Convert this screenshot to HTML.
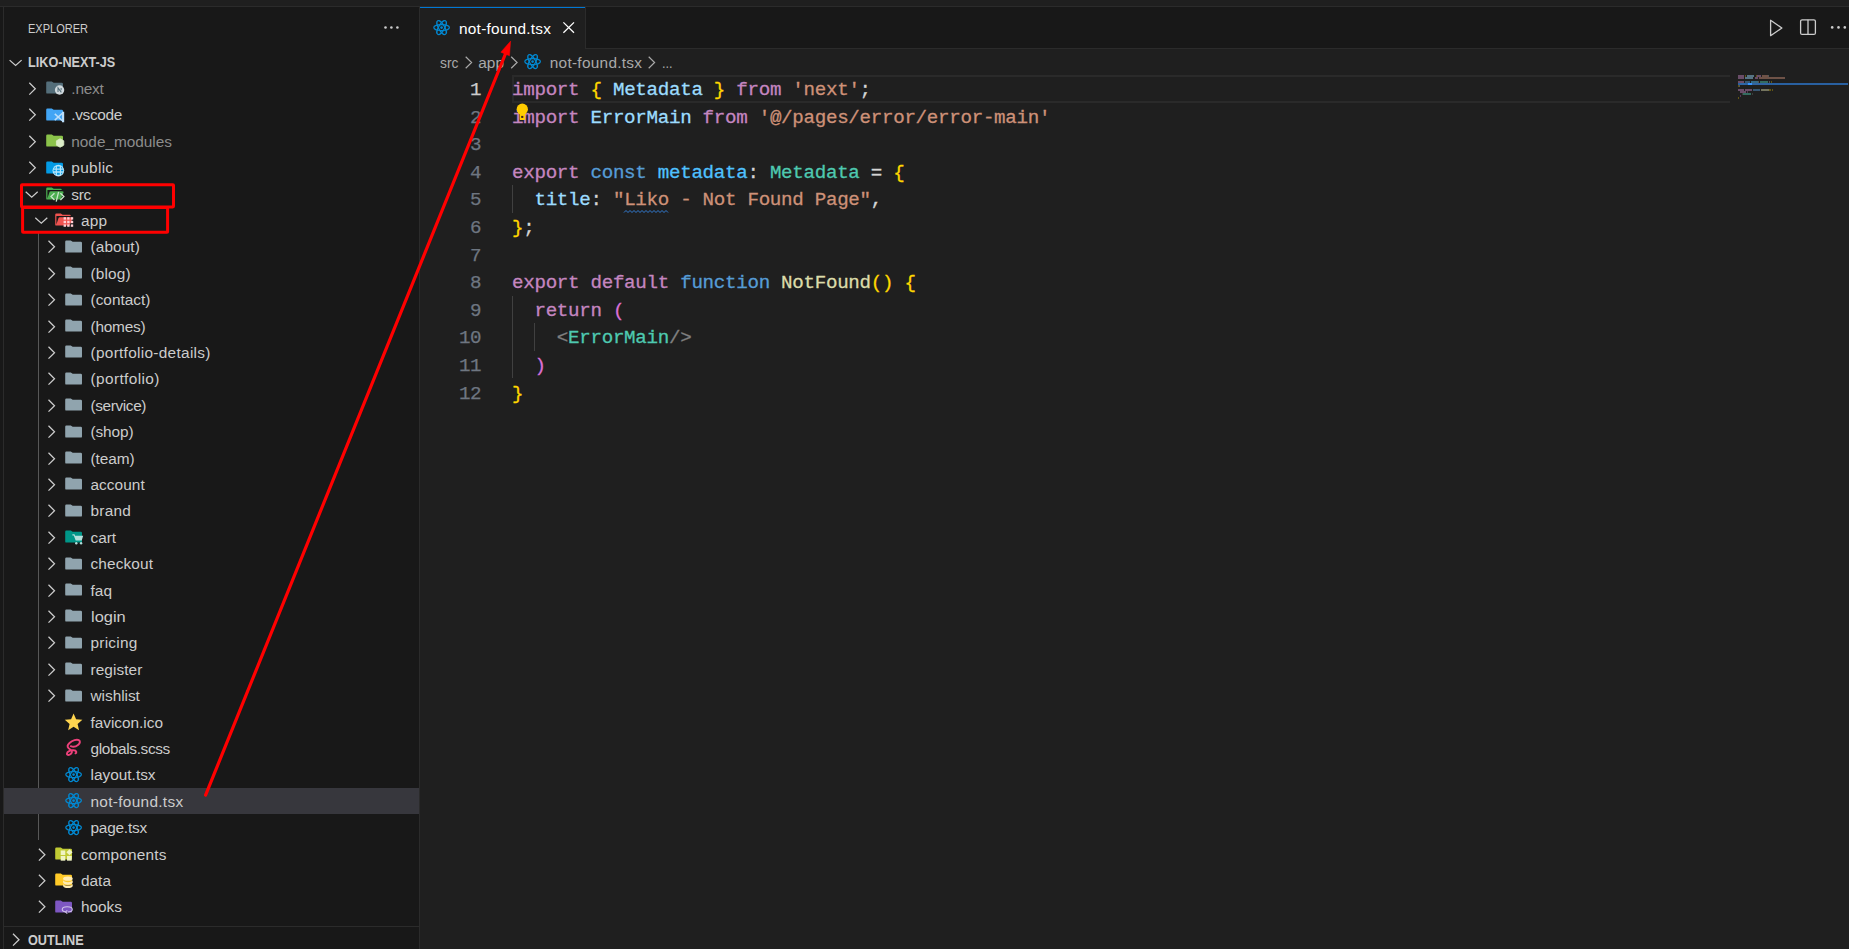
<!DOCTYPE html>
<html><head><meta charset="utf-8"><title>not-found.tsx</title>
<style>
html,body{margin:0;padding:0}
body{width:1849px;height:949px;overflow:hidden;background:#1f1f1f;position:relative;font-family:"Liberation Sans",sans-serif;color:#ccc}
div,svg{position:absolute}
.t{white-space:pre}
.i{overflow:visible}
#side{left:0;top:7px;width:419px;height:942px;background:#181818}
#tabs{left:420px;top:7px;width:1429px;height:41px;background:#181818}
.hl{background:#2b2b2b}
.sel{left:4px;width:415px;background:#37373d}
.ln{left:430px;width:51.300px;text-align:right;font-family:"Liberation Mono",monospace;font-size:19.2px;line-height:28px;letter-spacing:-0.304px;-webkit-text-stroke:0.25px currentColor}
.cl{left:512px;font-family:"Liberation Mono",monospace;font-size:19.2px;line-height:28px;letter-spacing:-0.304px;white-space:pre;color:#d4d4d4}
.cl span{-webkit-text-stroke:0.3px currentColor}
.g{width:1px;background:#404040}
.m{height:1.3px;opacity:.45}
</style></head><body>
<!-- top strip / borders -->
<div class="hl" style="left:0;top:6px;width:1849px;height:1px"></div>
<div id="side"></div>
<div class="hl" style="left:3px;top:7px;width:1px;height:942px"></div>
<div class="hl" style="left:419px;top:7px;width:1px;height:942px"></div>
<div id="tabs"></div>
<div class="hl" style="left:420px;top:48px;width:1429px;height:1px"></div>
<!-- active tab -->
<div style="left:420px;top:7px;width:165px;height:42px;background:#1f1f1f"></div>
<div style="left:420px;top:6.600px;width:165px;height:1.400px;background:#0078d4"></div>
<div class="hl" style="left:585px;top:7px;width:1px;height:41px"></div>
<svg class="i" style="left:432.00px;top:18.00px" width="19.2" height="19.2" viewBox="0 0 32 32"><ellipse cx="16" cy="16" rx="13" ry="5" fill="none" stroke="#0288d1" stroke-width="2"/><g transform="rotate(60 16 16)"><ellipse cx="16" cy="16" rx="13" ry="5" fill="none" stroke="#0288d1" stroke-width="2"/></g><g transform="rotate(120 16 16)"><ellipse cx="16" cy="16" rx="13" ry="5" fill="none" stroke="#0288d1" stroke-width="2"/></g><circle cx="16" cy="16" r="2.2" fill="#0288d1"/></svg>
<div class="t" style="left:459.00px;top:15px;font-size:15.4px;line-height:27px;color:#fff;letter-spacing:0.247px;">not-found.tsx</div>
<svg class="i" style="left:562.500px;top:22.300px" width="12" height="12" viewBox="0 0 12 12"><path d="M.4.400l10.600 10.400M11 .400L.4 10.800" stroke="#fff" stroke-width="1.300" fill="none"/></svg>
<!-- editor actions -->
<svg class="i" style="left:1760px;top:14px" width="89" height="28" viewBox="0 0 89 28"><g fill="none" stroke="#ccc" stroke-width="1.300" stroke-linejoin="round"><path d="M10.600 6.300v15.400l11.300-7.700Z"/><rect x="40.600" y="5.800" width="14.800" height="14.600" rx="1.500"/><path d="M48 5.800v14.600"/></g><g fill="#ccc"><circle cx="72.200" cy="13.400" r="1.300"/><circle cx="78.500" cy="13.400" r="1.300"/><circle cx="84.800" cy="13.400" r="1.300"/></g></svg>
<!-- breadcrumbs -->
<div class="t" style="left:439.60px;top:49px;font-size:15.4px;line-height:27px;color:#a9a9a9;letter-spacing:0.000px;transform:scaleX(0.8963);transform-origin:0 0;">src</div>
<div class="t" style="left:478.20px;top:49px;font-size:15.4px;line-height:27px;color:#a9a9a9;letter-spacing:0.052px;">app</div>
<svg class="i" style="left:523.00px;top:52.00px" width="19.2" height="19.2" viewBox="0 0 32 32"><ellipse cx="16" cy="16" rx="13" ry="5" fill="none" stroke="#0288d1" stroke-width="2"/><g transform="rotate(60 16 16)"><ellipse cx="16" cy="16" rx="13" ry="5" fill="none" stroke="#0288d1" stroke-width="2"/></g><g transform="rotate(120 16 16)"><ellipse cx="16" cy="16" rx="13" ry="5" fill="none" stroke="#0288d1" stroke-width="2"/></g><circle cx="16" cy="16" r="2.2" fill="#0288d1"/></svg>
<div class="t" style="left:549.80px;top:49px;font-size:15.4px;line-height:27px;color:#a9a9a9;letter-spacing:0.264px;">not-found.tsx</div>
<div class="t" style="left:662.00px;top:49px;font-size:15.4px;line-height:27px;color:#a9a9a9;letter-spacing:0.000px;transform:scaleX(0.8258);transform-origin:0 0;">...</div>
<svg class="i" style="left:420px;top:48px" width="300" height="27" viewBox="0 0 300 27"><g fill="none" stroke="#a9a9a9" stroke-width="1.200"><path d="M45.700 8.700l5.900 5.800-5.900 5.800M91.200 8.700l5.900 5.800-5.900 5.800M228.700 8.700l5.900 5.800-5.900 5.800"/></g></svg>
<!-- sidebar header -->
<div class="t" style="left:27.80px;top:16px;font-size:12.8px;line-height:25px;color:#ccc;letter-spacing:0.000px;transform:scaleX(0.8621);transform-origin:0 0;">EXPLORER</div>
<svg class="i" style="left:380px;top:20px" width="24" height="14" viewBox="0 0 24 14"><g fill="#ccc"><circle cx="5.500" cy="7.500" r="1.300"/><circle cx="11.400" cy="7.500" r="1.300"/><circle cx="17.400" cy="7.500" r="1.300"/></g></svg>
<div class="t" style="left:27.80px;top:50px;font-size:13.8px;line-height:25px;color:#ccc;letter-spacing:0.000px;transform:scaleX(0.9171);transform-origin:0 0;font-weight:bold;">LIKO-NEXT-JS</div>
<!-- tree -->
<div style="left:38px;top:233px;width:1px;height:607px;background:#585858"></div>
<svg class="i" style="left:44.70px;top:78.00px" width="19.2" height="19.2" viewBox="0 0 32 32"><path d="M13.844 7.536l-1.288-1.072A2 2 0 0 0 11.276 6H4a2 2 0 0 0-2 2v16a2 2 0 0 0 2 2h24a2 2 0 0 0 2-2V10a2 2 0 0 0-2-2H15.124a2 2 0 0 1-1.28-.464Z" fill="#546e7a"/><circle cx="24.300" cy="20" r="7.800" fill="#cfd8dc"/><path d="M21.700 23.500v-7l5.600 7.500M26.900 16.500v4" fill="none" stroke="#546e7a" stroke-width="1.700"/></svg>
<div class="t" style="left:71.30px;top:75px;font-size:15.4px;line-height:27px;color:#8c8c8c;letter-spacing:-0.197px;">.next</div>
<svg class="i" style="left:44.70px;top:105.00px" width="19.2" height="19.2" viewBox="0 0 32 32"><path d="M13.844 7.536l-1.288-1.072A2 2 0 0 0 11.276 6H4a2 2 0 0 0-2 2v16a2 2 0 0 0 2 2h24a2 2 0 0 0 2-2V10a2 2 0 0 0-2-2H15.124a2 2 0 0 1-1.28-.464Z" fill="#42a5f5"/><g fill="none" stroke="#bbdefb" stroke-linejoin="round"><path d="M16.300 14.800l14 12.700M16.300 25.200l14-12.700" stroke-width="2.400"/><path d="M30.200 11.200v17.600" stroke-width="3.600"/></g></svg>
<div class="t" style="left:71.30px;top:101px;font-size:15.4px;line-height:27px;color:#ccc;letter-spacing:-0.329px;">.vscode</div>
<svg class="i" style="left:44.70px;top:131.00px" width="19.2" height="19.2" viewBox="0 0 32 32"><path d="M13.844 7.536l-1.288-1.072A2 2 0 0 0 11.276 6H4a2 2 0 0 0-2 2v16a2 2 0 0 0 2 2h24a2 2 0 0 0 2-2V10a2 2 0 0 0-2-2H15.124a2 2 0 0 1-1.28-.464Z" fill="#8bc34a"/><path d="M25.200 12.800l6.200 3.600v7.200l-6.200 3.600-6.200-3.600v-7.200Z" fill="#dcedc8" stroke="#dcedc8" stroke-width="1.200" stroke-linejoin="round"/></svg>
<div class="t" style="left:71.30px;top:128px;font-size:15.4px;line-height:27px;color:#8c8c8c;letter-spacing:-0.030px;">node_modules</div>
<svg class="i" style="left:44.70px;top:158.00px" width="19.2" height="19.2" viewBox="0 0 32 32"><path d="M13.844 7.536l-1.288-1.072A2 2 0 0 0 11.276 6H4a2 2 0 0 0-2 2v16a2 2 0 0 0 2 2h24a2 2 0 0 0 2-2V10a2 2 0 0 0-2-2H15.124a2 2 0 0 1-1.28-.464Z" fill="#039be5"/><circle cx="22.300" cy="21" r="9.700" fill="#b3e5fc"/><g fill="#039be5"><path d="M14.200 19.700h3.600v2.600h-3.600zM19.800 19.700h5v2.600h-5zM26.800 19.700h3.600v2.600h-3.600zM20 14.200h4.600v3.300H19.800zM20 24.500h4.600v3.300H20z"/><path d="M15 17.500l2.800-3.300v3.300zM15 24.500l2.800 3.300v-3.300zM29.600 17.500l-2.800-3.300v3.300zM29.600 24.500l-2.800 3.300v-3.300z"/></g></svg>
<div class="t" style="left:71.30px;top:154px;font-size:15.4px;line-height:27px;color:#ccc;letter-spacing:0.312px;">public</div>
<svg class="i" style="left:44.70px;top:184.00px" width="19.2" height="19.2" viewBox="0 0 32 32"><path d="M28.967 12H9.442a2 2 0 0 0-1.898 1.368L4 24V10h24a2 2 0 0 0-2-2H15.124a2 2 0 0 1-1.28-.464l-1.288-1.072A2 2 0 0 0 11.276 6H4a2 2 0 0 0-2 2v16a2 2 0 0 0 2 2h22l4.805-11.212A2 2 0 0 0 28.967 12Z" fill="#4caf50"/><g fill="none" stroke="#c8e6c9" stroke-width="2.200"><path d="M15.800 15.300 10 21l5.800 5.700M25.700 15.300 31.500 21l-5.800 5.700M22.700 13l-4 16.500"/></g></svg>
<div class="t" style="left:71.30px;top:181px;font-size:15.4px;line-height:27px;color:#ccc;letter-spacing:-0.314px;">src</div>
<svg class="i" style="left:54.30px;top:210.00px" width="19.2" height="19.2" viewBox="0 0 32 32"><path d="M28.967 12H9.442a2 2 0 0 0-1.898 1.368L4 24V10h24a2 2 0 0 0-2-2H15.124a2 2 0 0 1-1.28-.464l-1.288-1.072A2 2 0 0 0 11.276 6H4a2 2 0 0 0-2 2v16a2 2 0 0 0 2 2h22l4.805-11.212A2 2 0 0 0 28.967 12Z" fill="#ef5350"/><g fill="#ffcdd2"><rect x="16" y="12" width="4" height="4"/><rect x="22" y="12" width="4" height="4"/><rect x="28" y="12" width="4" height="4"/><rect x="16" y="18" width="4" height="4"/><rect x="22" y="18" width="4" height="4"/><rect x="28" y="18" width="4" height="4"/><rect x="16" y="24" width="4" height="4"/><rect x="22" y="24" width="4" height="4"/><rect x="28" y="24" width="4" height="4"/></g></svg>
<div class="t" style="left:80.90px;top:207px;font-size:15.4px;line-height:27px;color:#ccc;letter-spacing:0.302px;">app</div>
<svg class="i" style="left:63.90px;top:237.00px" width="19.2" height="19.2" viewBox="0 0 32 32"><path d="M13.844 7.536l-1.288-1.072A2 2 0 0 0 11.276 6H4a2 2 0 0 0-2 2v16a2 2 0 0 0 2 2h24a2 2 0 0 0 2-2V10a2 2 0 0 0-2-2H15.124a2 2 0 0 1-1.28-.464Z" fill="#90a4ae"/></svg>
<div class="t" style="left:90.50px;top:233px;font-size:15.4px;line-height:27px;color:#ccc;letter-spacing:0.101px;">(about)</div>
<svg class="i" style="left:63.90px;top:263.00px" width="19.2" height="19.2" viewBox="0 0 32 32"><path d="M13.844 7.536l-1.288-1.072A2 2 0 0 0 11.276 6H4a2 2 0 0 0-2 2v16a2 2 0 0 0 2 2h24a2 2 0 0 0 2-2V10a2 2 0 0 0-2-2H15.124a2 2 0 0 1-1.28-.464Z" fill="#90a4ae"/></svg>
<div class="t" style="left:90.50px;top:260px;font-size:15.4px;line-height:27px;color:#ccc;letter-spacing:0.165px;">(blog)</div>
<svg class="i" style="left:63.90px;top:290.00px" width="19.2" height="19.2" viewBox="0 0 32 32"><path d="M13.844 7.536l-1.288-1.072A2 2 0 0 0 11.276 6H4a2 2 0 0 0-2 2v16a2 2 0 0 0 2 2h24a2 2 0 0 0 2-2V10a2 2 0 0 0-2-2H15.124a2 2 0 0 1-1.28-.464Z" fill="#90a4ae"/></svg>
<div class="t" style="left:90.50px;top:286px;font-size:15.4px;line-height:27px;color:#ccc;letter-spacing:0.011px;">(contact)</div>
<svg class="i" style="left:63.90px;top:316.00px" width="19.2" height="19.2" viewBox="0 0 32 32"><path d="M13.844 7.536l-1.288-1.072A2 2 0 0 0 11.276 6H4a2 2 0 0 0-2 2v16a2 2 0 0 0 2 2h24a2 2 0 0 0 2-2V10a2 2 0 0 0-2-2H15.124a2 2 0 0 1-1.28-.464Z" fill="#90a4ae"/></svg>
<div class="t" style="left:90.50px;top:313px;font-size:15.4px;line-height:27px;color:#ccc;letter-spacing:-0.213px;">(homes)</div>
<svg class="i" style="left:63.90px;top:342.00px" width="19.2" height="19.2" viewBox="0 0 32 32"><path d="M13.844 7.536l-1.288-1.072A2 2 0 0 0 11.276 6H4a2 2 0 0 0-2 2v16a2 2 0 0 0 2 2h24a2 2 0 0 0 2-2V10a2 2 0 0 0-2-2H15.124a2 2 0 0 1-1.28-.464Z" fill="#90a4ae"/></svg>
<div class="t" style="left:90.50px;top:339px;font-size:15.4px;line-height:27px;color:#ccc;letter-spacing:0.295px;">(portfolio-details)</div>
<svg class="i" style="left:63.90px;top:369.00px" width="19.2" height="19.2" viewBox="0 0 32 32"><path d="M13.844 7.536l-1.288-1.072A2 2 0 0 0 11.276 6H4a2 2 0 0 0-2 2v16a2 2 0 0 0 2 2h24a2 2 0 0 0 2-2V10a2 2 0 0 0-2-2H15.124a2 2 0 0 1-1.28-.464Z" fill="#90a4ae"/></svg>
<div class="t" style="left:90.50px;top:365px;font-size:15.4px;line-height:27px;color:#ccc;letter-spacing:0.385px;">(portfolio)</div>
<svg class="i" style="left:63.90px;top:395.00px" width="19.2" height="19.2" viewBox="0 0 32 32"><path d="M13.844 7.536l-1.288-1.072A2 2 0 0 0 11.276 6H4a2 2 0 0 0-2 2v16a2 2 0 0 0 2 2h24a2 2 0 0 0 2-2V10a2 2 0 0 0-2-2H15.124a2 2 0 0 1-1.28-.464Z" fill="#90a4ae"/></svg>
<div class="t" style="left:90.50px;top:392px;font-size:15.4px;line-height:27px;color:#ccc;letter-spacing:-0.380px;">(service)</div>
<svg class="i" style="left:63.90px;top:422.00px" width="19.2" height="19.2" viewBox="0 0 32 32"><path d="M13.844 7.536l-1.288-1.072A2 2 0 0 0 11.276 6H4a2 2 0 0 0-2 2v16a2 2 0 0 0 2 2h24a2 2 0 0 0 2-2V10a2 2 0 0 0-2-2H15.124a2 2 0 0 1-1.28-.464Z" fill="#90a4ae"/></svg>
<div class="t" style="left:90.50px;top:418px;font-size:15.4px;line-height:27px;color:#ccc;letter-spacing:-0.110px;">(shop)</div>
<svg class="i" style="left:63.90px;top:448.00px" width="19.2" height="19.2" viewBox="0 0 32 32"><path d="M13.844 7.536l-1.288-1.072A2 2 0 0 0 11.276 6H4a2 2 0 0 0-2 2v16a2 2 0 0 0 2 2h24a2 2 0 0 0 2-2V10a2 2 0 0 0-2-2H15.124a2 2 0 0 1-1.28-.464Z" fill="#90a4ae"/></svg>
<div class="t" style="left:90.50px;top:445px;font-size:15.4px;line-height:27px;color:#ccc;letter-spacing:-0.059px;">(team)</div>
<svg class="i" style="left:63.90px;top:474.00px" width="19.2" height="19.2" viewBox="0 0 32 32"><path d="M13.844 7.536l-1.288-1.072A2 2 0 0 0 11.276 6H4a2 2 0 0 0-2 2v16a2 2 0 0 0 2 2h24a2 2 0 0 0 2-2V10a2 2 0 0 0-2-2H15.124a2 2 0 0 1-1.28-.464Z" fill="#90a4ae"/></svg>
<div class="t" style="left:90.50px;top:471px;font-size:15.4px;line-height:27px;color:#ccc;letter-spacing:0.043px;">account</div>
<svg class="i" style="left:63.90px;top:501.00px" width="19.2" height="19.2" viewBox="0 0 32 32"><path d="M13.844 7.536l-1.288-1.072A2 2 0 0 0 11.276 6H4a2 2 0 0 0-2 2v16a2 2 0 0 0 2 2h24a2 2 0 0 0 2-2V10a2 2 0 0 0-2-2H15.124a2 2 0 0 1-1.28-.464Z" fill="#90a4ae"/></svg>
<div class="t" style="left:90.50px;top:497px;font-size:15.4px;line-height:27px;color:#ccc;letter-spacing:0.228px;">brand</div>
<svg class="i" style="left:63.90px;top:527.00px" width="19.2" height="19.2" viewBox="0 0 32 32"><path d="M13.844 7.536l-1.288-1.072A2 2 0 0 0 11.276 6H4a2 2 0 0 0-2 2v16a2 2 0 0 0 2 2h24a2 2 0 0 0 2-2V10a2 2 0 0 0-2-2H15.124a2 2 0 0 1-1.28-.464Z" fill="#009688"/><g fill="#b2dfdb"><path d="M14 12h3.500l1 2.500H32l-2.500 8H19.500L16.300 14H14Z"/><circle cx="20.500" cy="27" r="2"/><circle cx="28.500" cy="27" r="2"/></g></svg>
<div class="t" style="left:90.50px;top:524px;font-size:15.4px;line-height:27px;color:#ccc;letter-spacing:-0.024px;">cart</div>
<svg class="i" style="left:63.90px;top:554.00px" width="19.2" height="19.2" viewBox="0 0 32 32"><path d="M13.844 7.536l-1.288-1.072A2 2 0 0 0 11.276 6H4a2 2 0 0 0-2 2v16a2 2 0 0 0 2 2h24a2 2 0 0 0 2-2V10a2 2 0 0 0-2-2H15.124a2 2 0 0 1-1.28-.464Z" fill="#90a4ae"/></svg>
<div class="t" style="left:90.50px;top:550px;font-size:15.4px;line-height:27px;color:#ccc;letter-spacing:0.123px;">checkout</div>
<svg class="i" style="left:63.90px;top:580.00px" width="19.2" height="19.2" viewBox="0 0 32 32"><path d="M13.844 7.536l-1.288-1.072A2 2 0 0 0 11.276 6H4a2 2 0 0 0-2 2v16a2 2 0 0 0 2 2h24a2 2 0 0 0 2-2V10a2 2 0 0 0-2-2H15.124a2 2 0 0 1-1.28-.464Z" fill="#90a4ae"/></svg>
<div class="t" style="left:90.50px;top:577px;font-size:15.4px;line-height:27px;color:#ccc;letter-spacing:0.095px;">faq</div>
<svg class="i" style="left:63.90px;top:606.00px" width="19.2" height="19.2" viewBox="0 0 32 32"><path d="M13.844 7.536l-1.288-1.072A2 2 0 0 0 11.276 6H4a2 2 0 0 0-2 2v16a2 2 0 0 0 2 2h24a2 2 0 0 0 2-2V10a2 2 0 0 0-2-2H15.124a2 2 0 0 1-1.28-.464Z" fill="#90a4ae"/></svg>
<div class="t" style="left:90.50px;top:603px;font-size:15.4px;line-height:27px;color:#ccc;letter-spacing:0.000px;transform:scaleX(1.0664);transform-origin:0 0;">login</div>
<svg class="i" style="left:63.90px;top:633.00px" width="19.2" height="19.2" viewBox="0 0 32 32"><path d="M13.844 7.536l-1.288-1.072A2 2 0 0 0 11.276 6H4a2 2 0 0 0-2 2v16a2 2 0 0 0 2 2h24a2 2 0 0 0 2-2V10a2 2 0 0 0-2-2H15.124a2 2 0 0 1-1.28-.464Z" fill="#90a4ae"/></svg>
<div class="t" style="left:90.50px;top:629px;font-size:15.4px;line-height:27px;color:#ccc;letter-spacing:0.256px;">pricing</div>
<svg class="i" style="left:63.90px;top:659.00px" width="19.2" height="19.2" viewBox="0 0 32 32"><path d="M13.844 7.536l-1.288-1.072A2 2 0 0 0 11.276 6H4a2 2 0 0 0-2 2v16a2 2 0 0 0 2 2h24a2 2 0 0 0 2-2V10a2 2 0 0 0-2-2H15.124a2 2 0 0 1-1.28-.464Z" fill="#90a4ae"/></svg>
<div class="t" style="left:90.50px;top:656px;font-size:15.4px;line-height:27px;color:#ccc;letter-spacing:0.078px;">register</div>
<svg class="i" style="left:63.90px;top:686.00px" width="19.2" height="19.2" viewBox="0 0 32 32"><path d="M13.844 7.536l-1.288-1.072A2 2 0 0 0 11.276 6H4a2 2 0 0 0-2 2v16a2 2 0 0 0 2 2h24a2 2 0 0 0 2-2V10a2 2 0 0 0-2-2H15.124a2 2 0 0 1-1.28-.464Z" fill="#90a4ae"/></svg>
<div class="t" style="left:90.50px;top:682px;font-size:15.4px;line-height:27px;color:#ccc;letter-spacing:-0.033px;">wishlist</div>
<svg class="i" style="left:63.90px;top:712.00px" width="19.2" height="19.2" viewBox="0 0 32 32"><path d="M16 2.500l4.200 9.700 10.500.9-8 6.900 2.400 10.300L16 24.800 6.900 30.300l2.400-10.300-8-6.900 10.500-.9Z" fill="#ffd54f"/></svg>
<div class="t" style="left:90.50px;top:709px;font-size:15.4px;line-height:27px;color:#ccc;letter-spacing:-0.026px;">favicon.ico</div>
<svg class="i" style="left:63.90px;top:738.00px" width="19.2" height="19.2" viewBox="0 0 32 32"><path transform="translate(16 16) scale(1.06) translate(-18.300 -18.200)" d="M26.500 6.500c2.600 1.400 2.200 4.800-.8 7.200-3.400 2.800-8.800 3.800-11.800 2.300M26.500 6.500c-3.200-1.700-10 .3-14.600 4.300-3.600 3.100-3.800 6.100-1.600 8.300 1.800 1.800 4.500 2.700 5.200 4.900.7 2.300-1.400 4.800-4.200 5.600-2.200.6-3.700-.3-3.400-2 .4-2.300 4-4.600 8.300-5.200 3.500-.5 5.800.5 6.300 2.200.3 1.100-.2 2.100-1.200 2.600" fill="none" stroke="#ec407a" stroke-width="3.100" stroke-linecap="round"/></svg>
<div class="t" style="left:90.50px;top:735px;font-size:15.4px;line-height:27px;color:#ccc;letter-spacing:-0.371px;">globals.scss</div>
<svg class="i" style="left:63.90px;top:765.00px" width="19.2" height="19.2" viewBox="0 0 32 32"><ellipse cx="16" cy="16" rx="13" ry="5" fill="none" stroke="#0288d1" stroke-width="2"/><g transform="rotate(60 16 16)"><ellipse cx="16" cy="16" rx="13" ry="5" fill="none" stroke="#0288d1" stroke-width="2"/></g><g transform="rotate(120 16 16)"><ellipse cx="16" cy="16" rx="13" ry="5" fill="none" stroke="#0288d1" stroke-width="2"/></g><circle cx="16" cy="16" r="2.2" fill="#0288d1"/></svg>
<div class="t" style="left:90.50px;top:761px;font-size:15.4px;line-height:27px;color:#ccc;letter-spacing:0.005px;">layout.tsx</div>
<div class="sel" style="top:788px;height:26px"></div>
<svg class="i" style="left:63.90px;top:791.00px" width="19.2" height="19.2" viewBox="0 0 32 32"><ellipse cx="16" cy="16" rx="13" ry="5" fill="none" stroke="#0288d1" stroke-width="2"/><g transform="rotate(60 16 16)"><ellipse cx="16" cy="16" rx="13" ry="5" fill="none" stroke="#0288d1" stroke-width="2"/></g><g transform="rotate(120 16 16)"><ellipse cx="16" cy="16" rx="13" ry="5" fill="none" stroke="#0288d1" stroke-width="2"/></g><circle cx="16" cy="16" r="2.2" fill="#0288d1"/></svg>
<div class="t" style="left:90.50px;top:788px;font-size:15.4px;line-height:27px;color:#ccc;letter-spacing:0.305px;">not-found.tsx</div>
<svg class="i" style="left:63.90px;top:818.00px" width="19.2" height="19.2" viewBox="0 0 32 32"><ellipse cx="16" cy="16" rx="13" ry="5" fill="none" stroke="#0288d1" stroke-width="2"/><g transform="rotate(60 16 16)"><ellipse cx="16" cy="16" rx="13" ry="5" fill="none" stroke="#0288d1" stroke-width="2"/></g><g transform="rotate(120 16 16)"><ellipse cx="16" cy="16" rx="13" ry="5" fill="none" stroke="#0288d1" stroke-width="2"/></g><circle cx="16" cy="16" r="2.2" fill="#0288d1"/></svg>
<div class="t" style="left:90.50px;top:814px;font-size:15.4px;line-height:27px;color:#ccc;letter-spacing:-0.217px;">page.tsx</div>
<svg class="i" style="left:54.30px;top:844.00px" width="19.2" height="19.2" viewBox="0 0 32 32"><path d="M13.844 7.536l-1.288-1.072A2 2 0 0 0 11.276 6H4a2 2 0 0 0-2 2v16a2 2 0 0 0 2 2h24a2 2 0 0 0 2-2V10a2 2 0 0 0-2-2H15.124a2 2 0 0 1-1.28-.464Z" fill="#c0ca33"/><g fill="#f0f4c3"><rect x="11.200" y="10.800" width="7.600" height="7.600"/><rect x="11.200" y="20" width="7.600" height="7.800"/><rect x="21.700" y="20" width="7.900" height="7.800"/><path d="M25.800 8.700l5.200 5.100-5.200 5.100-5.200-5.100Z"/></g></svg>
<div class="t" style="left:80.90px;top:841px;font-size:15.4px;line-height:27px;color:#ccc;letter-spacing:0.178px;">components</div>
<svg class="i" style="left:54.30px;top:870.00px" width="19.2" height="19.2" viewBox="0 0 32 32"><path d="M13.844 7.536l-1.288-1.072A2 2 0 0 0 11.276 6H4a2 2 0 0 0-2 2v16a2 2 0 0 0 2 2h24a2 2 0 0 0 2-2V10a2 2 0 0 0-2-2H15.124a2 2 0 0 1-1.28-.464Z" fill="#ffca28"/><g fill="#ffecb3" transform="translate(.2 -.5)"><ellipse cx="23" cy="15" rx="8" ry="3.600"/><path d="M15 17.300c0 1.900 3.600 3.500 8 3.500s8-1.600 8-3.500v4.200c0 1.900-3.600 3.500-8 3.500s-8-1.600-8-3.500Z"/><path d="M15 23.300c0 1.900 3.600 3.500 8 3.500s8-1.600 8-3.500v3.800c0 1.900-3.600 3.500-8 3.500s-8-1.600-8-3.500Z"/></g></svg>
<div class="t" style="left:80.90px;top:867px;font-size:15.4px;line-height:27px;color:#ccc;letter-spacing:0.042px;">data</div>
<svg class="i" style="left:54.30px;top:897.00px" width="19.2" height="19.2" viewBox="0 0 32 32"><path d="M13.844 7.536l-1.288-1.072A2 2 0 0 0 11.276 6H4a2 2 0 0 0-2 2v16a2 2 0 0 0 2 2h24a2 2 0 0 0 2-2V10a2 2 0 0 0-2-2H15.124a2 2 0 0 1-1.28-.464Z" fill="#7e57c2"/><g fill="none" stroke="#d1c4e9" stroke-width="1.700"><path d="M19.500 24.900c-3.400-.6-5.800-2.200-5.800-4.200 0-2.400 3.800-4.300 8.400-4.300s8.400 1.900 8.400 4.300c0 2.300-3.400 4.100-7.600 4.300"/><path d="M22.200 22.200l-3 2.700 3 2.700"/></g></svg>
<div class="t" style="left:80.90px;top:893px;font-size:15.4px;line-height:27px;color:#ccc;letter-spacing:0.001px;">hooks</div>
<!-- outline -->
<div class="hl" style="left:4px;top:926px;width:415px;height:1px"></div>
<div class="t" style="left:27.80px;top:928px;font-size:13.8px;line-height:25px;color:#ccc;letter-spacing:0.000px;transform:scaleX(0.9197);transform-origin:0 0;font-weight:bold;">OUTLINE</div>
<svg class="i" style="left:0;top:0" width="420" height="949" viewBox="0 0 420 949"><g fill="none" stroke="#ccc" stroke-width="1.25"><path d="M29.30 82.80l6 5.900-6 5.900" /><path d="M29.30 108.80l6 5.900-6 5.900" /><path d="M29.30 135.80l6 5.900-6 5.900" /><path d="M29.30 161.80l6 5.900-6 5.900" /><path d="M25.70 191.80l6 5.400 6-5.400" /><path d="M35.30 217.80l6 5.400 6-5.400" /><path d="M48.50 240.80l6 5.900-6 5.900" /><path d="M48.50 267.80l6 5.900-6 5.900" /><path d="M48.50 293.80l6 5.900-6 5.900" /><path d="M48.50 320.80l6 5.900-6 5.900" /><path d="M48.50 346.80l6 5.900-6 5.900" /><path d="M48.50 372.80l6 5.900-6 5.900" /><path d="M48.50 399.80l6 5.900-6 5.900" /><path d="M48.50 425.80l6 5.900-6 5.900" /><path d="M48.50 452.80l6 5.900-6 5.900" /><path d="M48.50 478.80l6 5.900-6 5.900" /><path d="M48.50 504.80l6 5.900-6 5.900" /><path d="M48.50 531.80l6 5.900-6 5.900" /><path d="M48.50 557.80l6 5.900-6 5.900" /><path d="M48.50 584.80l6 5.900-6 5.900" /><path d="M48.50 610.80l6 5.900-6 5.900" /><path d="M48.50 636.80l6 5.900-6 5.900" /><path d="M48.50 663.80l6 5.900-6 5.900" /><path d="M48.50 689.80l6 5.900-6 5.900" /><path d="M38.90 848.80l6 5.900-6 5.900" /><path d="M38.90 874.80l6 5.900-6 5.900" /><path d="M38.90 900.80l6 5.900-6 5.900" /><path d="M9.60 60.10l6 5.400 6-5.400" /><path d="M13.00 933.80l6 5.900-6 5.900" /></g></svg>
<!-- editor -->
<div style="left:512px;top:75px;width:1218px;height:28px;box-sizing:border-box;border:solid #2a2a2a;border-width:2px 0 2px 2px"></div>
<div class="g" style="left:512px;top:185px;height:28px"></div><div class="g" style="left:512px;top:296px;height:82px"></div><div class="g" style="left:534px;top:323px;height:28px"></div>
<div class="ln" style="top:76px;color:#ccc">1</div>
<div class="cl" style="top:76px"><span style="color:#c586c0">import</span> <span style="color:#ffd700">{</span> <span style="color:#9cdcfe">Metadata</span> <span style="color:#ffd700">}</span> <span style="color:#c586c0">from</span> <span style="color:#ce9178">'next'</span><span style="color:#d4d4d4">;</span></div>
<div class="ln" style="top:104px;color:#6e7681">2</div>
<div class="cl" style="top:104px"><span style="color:#c586c0">import</span> <span style="color:#9cdcfe">ErrorMain</span> <span style="color:#c586c0">from</span> <span style="color:#ce9178">'@/pages/error/error-main'</span></div>
<div class="ln" style="top:131px;color:#6e7681">3</div>
<div class="ln" style="top:159px;color:#6e7681">4</div>
<div class="cl" style="top:159px"><span style="color:#c586c0">export</span> <span style="color:#569cd6">const</span> <span style="color:#4fc1ff">metadata</span><span style="color:#d4d4d4">:</span> <span style="color:#4ec9b0">Metadata</span> <span style="color:#d4d4d4">=</span> <span style="color:#ffd700">{</span></div>
<div class="ln" style="top:186px;color:#6e7681">5</div>
<div class="cl" style="top:186px">  <span style="color:#9cdcfe">title</span><span style="color:#d4d4d4">:</span> <span style="color:#ce9178">"Liko - Not Found Page"</span><span style="color:#d4d4d4">,</span></div>
<div class="ln" style="top:214px;color:#6e7681">6</div>
<div class="cl" style="top:214px"><span style="color:#ffd700">}</span><span style="color:#d4d4d4">;</span></div>
<div class="ln" style="top:242px;color:#6e7681">7</div>
<div class="ln" style="top:269px;color:#6e7681">8</div>
<div class="cl" style="top:269px"><span style="color:#c586c0">export</span> <span style="color:#c586c0">default</span> <span style="color:#569cd6">function</span> <span style="color:#dcdcaa">NotFound</span><span style="color:#ffd700">()</span> <span style="color:#ffd700">{</span></div>
<div class="ln" style="top:297px;color:#6e7681">9</div>
<div class="cl" style="top:297px">  <span style="color:#c586c0">return</span> <span style="color:#da70d6">(</span></div>
<div class="ln" style="top:324px;color:#6e7681">10</div>
<div class="cl" style="top:324px">    <span style="color:#808080">&lt;</span><span style="color:#4ec9b0">ErrorMain</span><span style="color:#808080">/&gt;</span></div>
<div class="ln" style="top:352px;color:#6e7681">11</div>
<div class="cl" style="top:352px">  <span style="color:#da70d6">)</span></div>
<div class="ln" style="top:380px;color:#6e7681">12</div>
<div class="cl" style="top:380px"><span style="color:#ffd700">}</span></div>
<!-- squiggle -->
<svg class="i" style="left:624px;top:208.500px" width="46" height="5" viewBox="0 0 46 5"><path d="M0 3.500l2-2 2 2 2-2 2 2 2-2 2 2 2-2 2 2 2-2 2 2 2-2 2 2 2-2 2 2 2-2 2 2 2-2 2 2 2-2 2 2 2-2 2 2" fill="none" stroke="#3794ff" stroke-width="1" opacity=".8"/></svg>
<!-- lightbulb -->
<svg class="i" style="left:515px;top:102px" width="16" height="20" viewBox="0 0 16 20"><circle cx="7.300" cy="7.200" r="5.650" fill="#ffcc00"/><path d="M4.700 11h5.400v6.200q0 .9-.9.900h-3.600q-.9 0-.9-.900Z" fill="#ffcc00"/><rect x="6.200" y="13.900" width="2.100" height="2" fill="#3a1f1f"/></svg>
<!-- minimap -->
<div class="m" style="left:1738.0px;top:75.3px;width:5.8px;background:#c586c0"></div><div class="m" style="left:1744.8px;top:75.3px;width:1.0px;background:#ffd700;opacity:.3"></div><div class="m" style="left:1746.7px;top:75.3px;width:7.8px;background:#9cdcfe"></div><div class="m" style="left:1755.5px;top:75.3px;width:1.0px;background:#ffd700;opacity:.3"></div><div class="m" style="left:1757.4px;top:75.3px;width:3.9px;background:#c586c0"></div><div class="m" style="left:1762.2px;top:75.3px;width:5.8px;background:#ce9178"></div><div class="m" style="left:1768.1px;top:75.3px;width:1.0px;background:#d4d4d4;opacity:.3"></div><div class="m" style="left:1738.0px;top:77.3px;width:5.8px;background:#c586c0"></div><div class="m" style="left:1744.8px;top:77.3px;width:8.7px;background:#9cdcfe"></div><div class="m" style="left:1754.5px;top:77.3px;width:3.9px;background:#c586c0"></div><div class="m" style="left:1759.3px;top:77.3px;width:26.2px;background:#ce9178"></div><div class="m" style="left:1738.0px;top:81.3px;width:5.8px;background:#c586c0"></div><div class="m" style="left:1744.8px;top:81.3px;width:4.8px;background:#569cd6"></div><div class="m" style="left:1750.6px;top:81.3px;width:7.8px;background:#4fc1ff"></div><div class="m" style="left:1758.4px;top:81.3px;width:1.0px;background:#d4d4d4;opacity:.3"></div><div class="m" style="left:1760.3px;top:81.3px;width:7.8px;background:#4ec9b0"></div><div class="m" style="left:1769.0px;top:81.3px;width:1.0px;background:#d4d4d4;opacity:.3"></div><div class="m" style="left:1771.0px;top:81.3px;width:1.0px;background:#ffd700;opacity:.3"></div><div class="m" style="left:1739.9px;top:83.3px;width:4.8px;background:#9cdcfe"></div><div class="m" style="left:1744.8px;top:83.3px;width:1.0px;background:#d4d4d4;opacity:.3"></div><div class="m" style="left:1746.7px;top:83.3px;width:22.3px;background:#ce9178"></div><div class="m" style="left:1769.0px;top:83.3px;width:1.0px;background:#d4d4d4;opacity:.3"></div><div class="m" style="left:1738.0px;top:85.3px;width:1.0px;background:#ffd700;opacity:.3"></div><div class="m" style="left:1739.0px;top:85.3px;width:1.0px;background:#d4d4d4;opacity:.3"></div><div class="m" style="left:1738.0px;top:89.3px;width:5.8px;background:#c586c0"></div><div class="m" style="left:1744.8px;top:89.3px;width:6.8px;background:#c586c0"></div><div class="m" style="left:1752.5px;top:89.3px;width:7.8px;background:#569cd6"></div><div class="m" style="left:1761.3px;top:89.3px;width:7.8px;background:#dcdcaa"></div><div class="m" style="left:1769.0px;top:89.3px;width:1.9px;background:#ffd700;opacity:.3"></div><div class="m" style="left:1772.0px;top:89.3px;width:1.0px;background:#ffd700;opacity:.3"></div><div class="m" style="left:1739.9px;top:91.3px;width:5.8px;background:#c586c0"></div><div class="m" style="left:1746.7px;top:91.3px;width:1.0px;background:#da70d6;opacity:.3"></div><div class="m" style="left:1741.9px;top:93.3px;width:1.0px;background:#808080;opacity:.3"></div><div class="m" style="left:1742.8px;top:93.3px;width:8.7px;background:#4ec9b0"></div><div class="m" style="left:1751.6px;top:93.3px;width:1.9px;background:#808080;opacity:.3"></div><div class="m" style="left:1739.9px;top:95.3px;width:1.0px;background:#da70d6;opacity:.3"></div><div class="m" style="left:1738.0px;top:97.3px;width:1.0px;background:#ffd700;opacity:.3"></div>
<div style="left:1738px;top:83px;width:110px;height:2px;background:#2a66ab;opacity:.92"></div>
<div style="left:1748px;top:83px;width:4.300px;height:2px;background:#3794ff"></div>
<!-- annotations -->
<svg class="i" style="left:0;top:0" width="1849" height="949" viewBox="0 0 1849 949"><g fill="none" stroke="#ff0000" stroke-width="3">
<rect x="21.500" y="184.700" width="152" height="22.200" rx=".6"/>
<rect x="22.600" y="207.500" width="145" height="24.800" rx=".6"/>
<path d="M205.600 795.100L505.600 53.500" stroke-width="3.200" stroke-linecap="round"/></g>
<path d="M510.600 41.100L500.800 52.200L509.500 55.800Z" fill="#ff0000" stroke="#ff0000" stroke-width=".5"/></svg>
</body></html>
